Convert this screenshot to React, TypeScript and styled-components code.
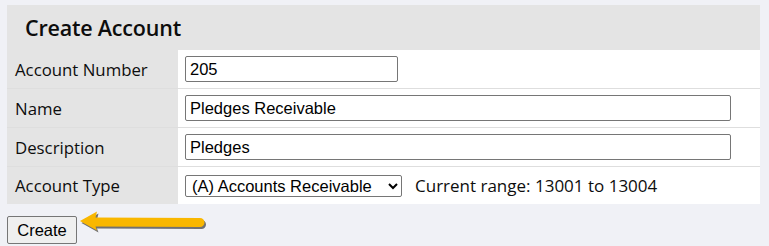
import React from "react";
import styled, { createGlobalStyle } from "styled-components";

const Global = createGlobalStyle`
  html, body { margin: 0; padding: 0; background: #f0f1f6; }
  body { font-family: "Open Sans", "Noto Sans", sans-serif; color: #111; }
`;

const Page = styled.div`
  padding: 5px 9px 0 7px;
`;

const Panel = styled.div`
  width: 753px;
  background: #ffffff;
`;

const Header = styled.div`
  height: 45px;
  background: #e4e4e4;
  display: flex;
  align-items: center;
  padding-left: 18px;
  font-size: 21.5px;
  font-weight: 600;
  color: #0d0d0d;
  letter-spacing: -0.2px;
`;

const Row = styled.div<{ $last?: boolean }>`
  display: grid;
  grid-template-columns: 171px 1fr;
  height: ${(p) => (p.$last ? "37px" : "38px")};
  border-bottom: ${(p) => (p.$last ? "none" : "1px solid #dedede")};
`;

const Label = styled.div`
  background: #e4e4e4;
  display: flex;
  align-items: center;
  padding-left: 8px;
  font-size: 16.8px;
  color: #0d0d0d;
`;

const Cell = styled.div`
  display: flex;
  align-items: center;
  padding-left: 7px;
  gap: 13px;
`;

const TextInput = styled.input<{ $w: number }>`
  box-sizing: border-box;
  width: ${(p) => p.$w}px;
  height: 26px;
  border: 1px solid #767676;
  border-radius: 2px;
  padding: 0 4px;
  font-family: "Liberation Sans", Arial, sans-serif;
  font-size: 16.5px;
  color: #000;
  background: #fff;
  outline: none;
`;

const Select = styled.select`
  box-sizing: border-box;
  width: 217px;
  height: 22px;
  border: 1px solid #767676;
  border-radius: 2px;
  font-family: "Liberation Sans", Arial, sans-serif;
  font-size: 16.5px;
  color: #000;
  background: #fff;
  padding: 0 0 0 2px;
`;

const Note = styled.span`
  font-size: 17px;
  color: #0d0d0d;
`;

const Actions = styled.div`
  display: flex;
  align-items: center;
  margin-top: 12px;
`;

const Button = styled.button`
  box-sizing: border-box;
  width: 70px;
  height: 28px;
  border: 1px solid #767676;
  border-radius: 2px;
  background: #efefef;
  font-family: "Liberation Sans", Arial, sans-serif;
  font-size: 16.5px;
  color: #000;
  padding: 0;
`;

const Arrow = styled.svg`
  display: block;
  margin-left: 1px;
  margin-top: -14px;
`;

const ARROW =
  "M2 10 L19 0.5 L17.5 6.5 L122 7 A4.5 4.5 0 0 1 122 16 L17.5 15.5 L19 19.5 Z";

export default function App() {
  return (
    <>
      <Global />
      <Page>
        <Panel>
          <Header>Create Account</Header>
          <Row>
            <Label>Account Number</Label>
            <Cell>
              <TextInput $w={213} defaultValue="205" />
            </Cell>
          </Row>
          <Row>
            <Label>Name</Label>
            <Cell>
              <TextInput $w={546} defaultValue="Pledges Receivable" />
            </Cell>
          </Row>
          <Row>
            <Label>Description</Label>
            <Cell>
              <TextInput $w={546} defaultValue="Pledges" />
            </Cell>
          </Row>
          <Row $last>
            <Label>Account Type</Label>
            <Cell>
              <Select defaultValue="A">
                <option value="A">(A) Accounts Receivable</option>
              </Select>
              <Note>Current range: 13001 to 13004</Note>
            </Cell>
          </Row>
        </Panel>
        <Actions>
          <Button>Create</Button>
          <Arrow width="132" height="24" viewBox="0 0 132 24">
            <g transform="translate(1.5,2)" fill="#3a3a3a" opacity="0.7">
              <path d={ARROW} />
            </g>
            <path d={ARROW} fill="#f9b700" />
          </Arrow>
        </Actions>
      </Page>
    </>
  );
}
